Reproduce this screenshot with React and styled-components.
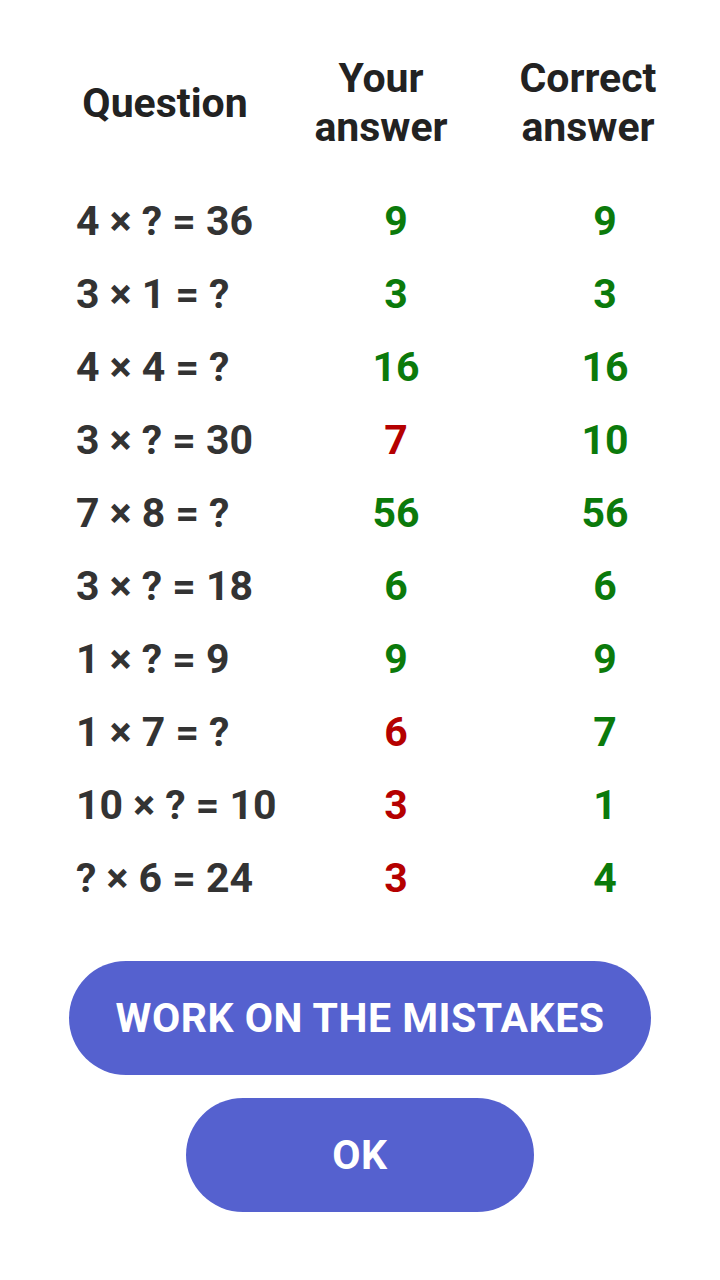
import React from "react";
import styled, { createGlobalStyle } from "styled-components";

const Global = createGlobalStyle`
  html, body { margin: 0; padding: 0; background: #ffffff; }
  body { font-family: Roboto, "Noto Sans", "Liberation Sans", sans-serif; }
`;

const Page = styled.div`
  width: 720px;
  min-height: 1280px;
  box-sizing: border-box;
  padding-top: 54px;
  display: flex;
  flex-direction: column;
  align-items: stretch;
`;

const HeaderRow = styled.div`
  display: grid;
  grid-template-columns: 178px 254px 160px;
  padding-left: 76px;
  align-items: center;
  font-size: 41px;
  font-weight: 700;
  line-height: 49px;
  color: #222222;
  text-align: center;
`;

const Table = styled.div`
  margin-top: 32px;
  display: flex;
  flex-direction: column;
`;

const Row = styled.div`
  display: grid;
  grid-template-columns: 214px 212px 206px;
  padding-left: 76px;
  height: 73px;
  align-items: center;
  font-size: 41px;
  font-weight: 700;
`;

const Question = styled.div`
  color: #333333;
  white-space: nowrap;
`;

const Answer = styled.div`
  text-align: center;
  color: ${(p) => (p.$wrong ? "#b50000" : "#0b7a0b")};
`;

const Buttons = styled.div`
  margin-top: 47px;
  display: flex;
  flex-direction: column;
  align-items: center;
  gap: 23px;
`;

const Button = styled.button`
  width: ${(p) => p.$width}px;
  height: 114px;
  border: none;
  border-radius: 57px;
  background: #5561cf;
  color: #ffffff;
  font-family: Roboto, "Noto Sans", "Liberation Sans", sans-serif;
  font-size: 41px;
  letter-spacing: 0.5px;
  font-weight: 700;
  padding: 0;
  cursor: pointer;
`;

const rows = [
  ["4 × ? = 36", 9, 9],
  ["3 × 1 = ?", 3, 3],
  ["4 × 4 = ?", 16, 16],
  ["3 × ? = 30", 7, 10],
  ["7 × 8 = ?", 56, 56],
  ["3 × ? = 18", 6, 6],
  ["1 × ? = 9", 9, 9],
  ["1 × 7 = ?", 6, 7],
  ["10 × ? = 10", 3, 1],
  ["? × 6 = 24", 3, 4],
];

export default function App() {
  return (
    <>
      <Global />
      <Page>
        <HeaderRow>
          <div>Question</div>
          <div>Your<br />answer</div>
          <div>Correct<br />answer</div>
        </HeaderRow>
        <Table>
          {rows.map(([q, a, c], i) => (
            <Row key={i}>
              <Question>{q}</Question>
              <Answer $wrong={a !== c}>{a}</Answer>
              <Answer>{c}</Answer>
            </Row>
          ))}
        </Table>
        <Buttons>
          <Button $width={582}>WORK ON THE MISTAKES</Button>
          <Button $width={348}>OK</Button>
        </Buttons>
      </Page>
    </>
  );
}
